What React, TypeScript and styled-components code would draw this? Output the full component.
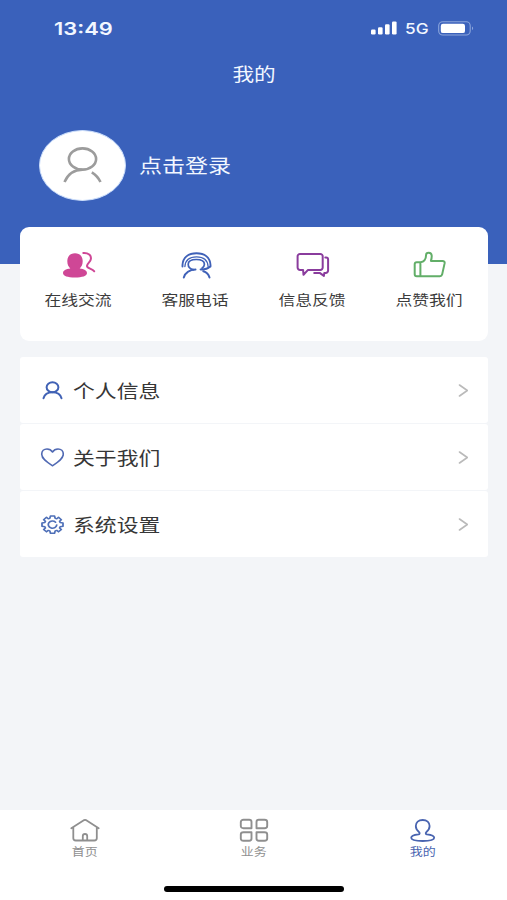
import React from "react";
import styled, { createGlobalStyle } from "styled-components";

const GlobalStyle = createGlobalStyle`
  * { box-sizing: border-box; }
  body {
    margin: 0;
    background: #f3f5f8;
    font-family: "Noto Sans CJK SC", "Liberation Sans", sans-serif;
  }
`;

const BLUE = "#3a61bb";

const Screen = styled.div`
  width: 507px;
  height: 900px;
  display: flex;
  flex-direction: column;
  background: #f3f5f8;
  overflow: hidden;
`;

const Header = styled.header`
  flex: none;
  height: 264px;
  background: ${BLUE};
  color: #f2f7ff;
`;

const StatusBar = styled.div`
  height: 56px;
  padding: 0 33px 0 54px;
  display: flex;
  align-items: center;
  justify-content: space-between;
  font-family: Inter, sans-serif;
`;

const Clock = styled.div`
  padding-top: 2px;
`;

const StatusIcons = styled.div`
  display: flex;
  align-items: center;
`;

/* Wide lettering: the glyphs are drawn 1.2 times as wide as they are high. */
const Wide = styled.span<{ $size: number; $weight?: number; $origin?: string; $scale?: number }>`
  display: block;
  white-space: nowrap;
  font-size: ${(p) => p.$size}px;
  line-height: 1.4;
  font-weight: ${(p) => p.$weight ?? 400};
  transform: scaleX(${(p) => p.$scale ?? 1.2});
  transform-origin: ${(p) => p.$origin ?? "center"};
`;

const Network = styled.div`
  width: 24px;
  margin: 0 9px 0 8px;
`;

const Title = styled.h1`
  margin: 0;
  height: 36px;
  display: flex;
  align-items: center;
  justify-content: center;
`;

const Login = styled.div`
  display: flex;
  align-items: center;
  gap: 13px;
  height: 72px;
  margin: 37px 0 0 39px;
`;

const LoginLabel = styled.div`
  padding-top: 1px;
`;

const Avatar = styled.div`
  width: 87px;
  height: 71px;
  border-radius: 50%;
  border: 1.5px solid #c9dcfa;
  background: #fff;
  display: flex;
  align-items: center;
  justify-content: center;
`;

const Main = styled.main`
  flex: 1;
  margin: -37px 19px 0 20px;
`;

const Actions = styled.section`
  height: 113.5px;
  padding: 24px 0 0 0;
  position: relative;
  display: grid;
  grid-template-columns: repeat(4, 117px);
  background: #fff;
  border-radius: 9px;
`;

const Action = styled.div`
  display: flex;
  flex-direction: column;
  align-items: center;
  gap: 11px;
  color: #3c3c3c;
`;

const ActionLabel = styled.div`
  padding-right: 1px;
`;

const List = styled.section`
  margin-top: 16.5px;
  display: flex;
  flex-direction: column;
  gap: 1px;
`;

const Row = styled.div`
  height: 66px;
  padding: 1px 20px 0 20px;
  display: flex;
  align-items: center;
  gap: 9px;
  background: #fff;
  border-radius: 3px;
  color: #363636;
`;

const RowLabel = styled.div`
  flex: 1;
`;

const TabBar = styled.nav`
  flex: none;
  height: 90px;
  background: #fff;
  display: flex;
  flex-direction: column;
  align-items: center;
`;

const Tabs = styled.div`
  width: 100%;
  height: 76px;
  padding-top: 8px;
  display: grid;
  grid-template-columns: repeat(3, 1fr);
`;

const Tab = styled.div<{ $active?: boolean }>`
  display: flex;
  flex-direction: column;
  align-items: center;
  gap: 1px;
  color: ${(p) => (p.$active ? "#4964b0" : "#8f8f8f")};
`;

const TabLabel = styled.div`
  height: 16px;
  display: flex;
  align-items: center;
`;

const HomeIndicator = styled.div`
  width: 180px;
  height: 6px;
  border-radius: 3px;
  background: #000;
`;

const Svg = styled.svg`
  display: block;
  flex: none;
  fill: none;
  stroke: currentColor;
  stroke-width: 2;
  stroke-linecap: round;
  stroke-linejoin: round;
`;

const SignalIcon = () => (
  <Svg width="26" height="14" viewBox="0 0 26 14">
    <g fill="#fff" stroke="none">
      <rect x="0" y="8.5" width="4.6" height="5" rx="1.2" />
      <rect x="7" y="6.2" width="4.6" height="7.3" rx="1.2" />
      <rect x="14" y="3.2" width="4.6" height="10.3" rx="1.2" />
      <rect x="21" y="0.4" width="4.6" height="13.1" rx="1.2" />
    </g>
  </Svg>
);

const BatteryIcon = () => (
  <Svg width="36" height="15" viewBox="0 0 36 15">
    <rect x="0.7" y="0.8" width="31.5" height="13.2" rx="4" stroke="#8ba5dc" strokeWidth="1.1" />
    <rect x="2.8" y="2.7" width="24.2" height="9.4" rx="2.2" fill="#fff" stroke="none" />
    <path d="M34 5.600c1.500.6 1.500 3 0 3.600z" fill="#8ba5dc" stroke="none" />
  </Svg>
);

const AvatarIcon = () => (
  <Svg width="40" height="38" viewBox="0 0 40 38" color="#9c9c9c">
    <g strokeWidth="2.6" strokeLinecap="butt">
      <ellipse cx="19.500" cy="13" rx="13.600" ry="10.600" />
      <path d="M1.500 36C5 28 11 23.800 19.500 23.800M28.800 26.300c3.700 2.200 6.700 5.500 8.700 9.700" />
    </g>
  </Svg>
);

const ChatIcon = () => (
  <Svg width="34" height="28" viewBox="0 0 34 28" color="#cf4796">
    <path
      d="M13 2.300c-4.700 0-7.700 3-7.700 7.700 0 3.500 1.200 5.800 3 7.500-4.500.6-7.300 2-7.300 4.600 0 3 4.700 4.500 12 4.500s12-1.500 12-4.500c0-2.600-2.800-4-7.300-4.600 1.800-1.700 3-4 3-7.500 0-4.700-3-7.700-7.700-7.700z"
      fill="currentColor"
      stroke="none"
    />
    <path d="M21.300 2c5.200-.3 8 2.200 7.600 5.800-.3 3.200-3.600 4.200-3.900 7-.2 2.700 5.300 2.500 7.200 5.500" />
  </Svg>
);

const ServiceIcon = () => (
  <Svg width="34" height="28" viewBox="0 0 34 28" color="#3f61b8">
    <path d="M3.500 15.500V14C4 6.500 9.500 2.300 17.500 2.300S31 6.500 31.500 14v1.500" strokeWidth="1.900" />
    <path d="M5.900 15.500c.5-6.500 4.800-9.600 11.600-9.600s11.100 3.100 11.600 9.600" strokeWidth="1.300" />
    <path d="M14.500 18.700c-3.500-.8-5.300-3.200-5.300-5.500 0-3 3.300-4.700 8.100-4.700s8.100 1.700 8.100 4.700c0 1.500-.8 2.800-2.400 4" strokeWidth="1.700" />
    <path d="M30.800 15.800c-2 2-5.500 2.700-9.200 2.600M4.800 26.500c1.500-4.500 5.500-7.600 11.700-7.900M24.300 20.300c3 .8 5.300 3 6.200 6.200" />
  </Svg>
);

const FeedbackIcon = () => (
  <Svg width="34" height="28" viewBox="0 0 34 28" color="#8a3c9d">
    <path d="M4 2.900h20.300a2.400 2.400 0 0 1 2.400 2.400v11.200a2.400 2.400 0 0 1-2.400 2.400H12l-4.500 4.900-.4-4.900H4a2.400 2.400 0 0 1-2.400-2.400V5.300A2.400 2.400 0 0 1 4 2.900z" />
    <path d="M29.300 6.500h.8a2 2 0 0 1 2 2v11a2.400 2.400 0 0 1-2.400 2.400h-1.400l-.4 3-4.200-3h-5.500" />
  </Svg>
);

const ThumbIcon = () => (
  <Svg width="34" height="28" viewBox="0 0 34 28" color="#62ae68">
    <path d="M7.400 11.300H3.700a2 2 0 0 0-2 2v10a2 2 0 0 0 2 2h3.700zM7.400 11.300c4-.6 5.600-3.500 5.700-7.300 0-1.600 1.200-2.300 2.600-2.300 1.600 0 2.900 1.100 3 3 .1 1.900-.3 3.700-.8 5.200h11.500c1.800 0 2.500 1 2.200 2.500l-2.500 11.200c-.3 1.200-1 1.700-2.200 1.700H7.400" />
  </Svg>
);

const PersonIcon = () => (
  <Svg width="24" height="20" viewBox="0 0 24 20" color="#4162b5">
    <ellipse cx="12.500" cy="6.300" rx="5.900" ry="5" />
    <path d="M3.500 17.300c1-3.900 4.300-6 9-6s8 2.100 9 6" />
  </Svg>
);

const HeartIcon = () => (
  <Svg width="24" height="20" viewBox="0 0 24 20" color="#5069b3">
    <path d="M12.500 17.800C7 14.200 1.700 10.800 1.700 6.200 1.700 3 4 1 7 1c2.400 0 4.300 1.100 5.500 3 1.200-1.900 3.100-3 5.500-3 3 0 5.300 2 5.300 5.200 0 4.600-5.300 8-10.800 11.600z" strokeWidth="1.600" />
  </Svg>
);

const GearIcon = () => (
  <Svg width="24" height="20" viewBox="0 0 24 20" color="#4f70b8">
    <g transform="translate(12.500 9.600) scale(1.18 .98)" strokeWidth="1.500">
      <path d="M-1.700-8.800h3.400L2.300-6.400 3.600-5.900 5.100-7.400 7.500-5 6-3.500 6.500-2.200 8.900-1.700v3.400L6.500 2.200 6 3.500 7.500 5 5.100 7.400 3.600 5.900 2.300 6.400 1.700 8.800h-3.400L-2.300 6.400-3.600 5.900-5.100 7.400-7.500 5-6 3.500-6.500 2.200-8.900 1.700v-3.400L-6.500-2.200-6-3.500-7.500-5-5.100-7.400-3.600-5.900-2.300-6.400z" />
      <path d="M2.600-2.500A3.600 3.600 0 1 0 3.600.3" />
    </g>
  </Svg>
);

const Chevron = () => (
  <Svg width="10" height="14" viewBox="0 0 10 14" color="#bababa">
    <path d="M1.500 1L9.300 6.500l-7.800 5.500" strokeWidth="1.600" />
  </Svg>
);

const HomeIcon = () => (
  <Svg width="30" height="25" viewBox="0 0 30 25">
    <path d="M1.300 10.200L14.200 2.100a2 2 0 0 1 1.700 0l12.800 8.100M3.300 9.100v11.200c0 1.500.8 2.200 2.500 2.200h18.500c1.700 0 2.500-.7 2.500-2.200V9.100M12.800 22.100v-4c0-1.300.8-2.100 2.200-2.100s2.200.8 2.200 2.100v4" strokeWidth="1.800" />
  </Svg>
);

const GridIcon = () => (
  <Svg width="30" height="25" viewBox="0 0 30 25">
    <g strokeWidth="1.900">
      <path d="M4.500 1.800h5.700c1.500 0 2.300.8 2.300 2.100v6.300h-8c-1.700 0-2.700-.8-2.700-2.200V4c0-1.400 1-2.200 2.700-2.200z" />
      <path d="M19.800 1.800h5.700c1.700 0 2.700.8 2.700 2.200v4c0 1.400-1 2.200-2.700 2.200h-8V3.900c0-1.300.8-2.100 2.300-2.100z" />
      <path d="M4.500 14.300h8v6.300c0 1.400-.8 2.200-2.300 2.200H4.500c-1.700 0-2.700-.8-2.700-2.200v-4.100c0-1.400 1-2.200 2.700-2.200z" />
      <path d="M17.500 14.300h8c1.700 0 2.700.8 2.700 2.200v4.100c0 1.400-1 2.200-2.700 2.200h-5.700c-1.500 0-2.300-.8-2.300-2.200z" />
    </g>
  </Svg>
);

const MineIcon = () => (
  <Svg width="30" height="25" viewBox="0 0 30 25">
    <path
      d="M14.700 2c-4.200 0-6.900 2.500-6.900 6.100 0 2.800 1.500 4.700 3.400 6.200.9.900.4 1.900-.8 2.100C6.100 16.900 3.200 17.800 3.200 19.800c0 2.200 4.500 3.200 11.500 3.200s11.500-1 11.500-3.200c0-2-2.900-2.900-7.200-3.400-1.200-.2-1.700-1.200-.8-2.100 1.900-1.500 3.400-3.400 3.400-6.200 0-3.600-2.700-6.100-6.900-6.100z"
      strokeWidth="1.800"
    />
  </Svg>
);

const actions = [
  { label: "在线交流", Icon: ChatIcon },
  { label: "客服电话", Icon: ServiceIcon },
  { label: "信息反馈", Icon: FeedbackIcon },
  { label: "点赞我们", Icon: ThumbIcon },
];

const rows = [
  { label: "个人信息", Icon: PersonIcon },
  { label: "关于我们", Icon: HeartIcon },
  { label: "系统设置", Icon: GearIcon },
];

const tabs = [
  { label: "首页", Icon: HomeIcon, active: false },
  { label: "业务", Icon: GridIcon, active: false },
  { label: "我的", Icon: MineIcon, active: true },
];

export default function App() {
  return (
    <Screen>
      <GlobalStyle />
      <Header>
        <StatusBar>
          <Clock>
            <Wide $size={17.800} $weight={600} $origin="left" $scale={1.23}>13:49</Wide>
          </Clock>
          <StatusIcons>
            <SignalIcon />
            <Network>
              <Wide $size={15} $weight={500} $origin="left" $scale={1.15}>5G</Wide>
            </Network>
            <BatteryIcon />
          </StatusIcons>
        </StatusBar>
        <Title>
          <Wide $size={18}>我的</Wide>
        </Title>
        <Login>
          <Avatar>
            <AvatarIcon />
          </Avatar>
          <LoginLabel>
            <Wide $size={19.200} $origin="left">点击登录</Wide>
          </LoginLabel>
        </Login>
      </Header>
      <Main>
        <Actions>
          {actions.map(({ label, Icon }) => (
            <Action key={label}>
              <Icon />
              <ActionLabel>
                <Wide $size={14}>{label}</Wide>
              </ActionLabel>
            </Action>
          ))}
        </Actions>
        <List>
          {rows.map(({ label, Icon }) => (
            <Row key={label}>
              <Icon />
              <RowLabel>
                <Wide $size={18.200} $origin="left">{label}</Wide>
              </RowLabel>
              <Chevron />
            </Row>
          ))}
        </List>
      </Main>
      <TabBar>
        <Tabs>
          {tabs.map(({ label, Icon, active }) => (
            <Tab key={label} $active={active}>
              <Icon />
              <TabLabel>
                <Wide $size={10.800}>{label}</Wide>
              </TabLabel>
            </Tab>
          ))}
        </Tabs>
        <HomeIndicator />
      </TabBar>
    </Screen>
  );
}
